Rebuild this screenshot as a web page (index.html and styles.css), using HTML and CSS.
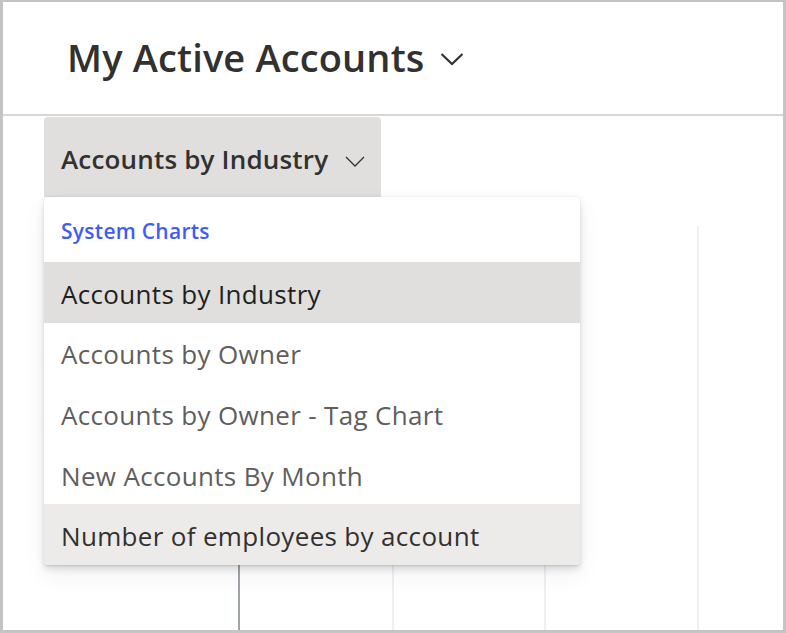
FILE: index.html
```html
<!DOCTYPE html>
<html lang="en">
<head>
<meta charset="utf-8">
<title>My Active Accounts</title>
<link rel="stylesheet" href="styles.css">
</head>
<body>
<div class="frame">
  <header class="header">
    <h1 class="title">My Active Accounts</h1>
    <svg class="title-chevron" width="24" height="14" viewBox="0 0 24 14"><polyline points="1.5,2 12,12 22.5,2" fill="none" stroke="#323130" stroke-width="2.2"/></svg>
  </header>
  <main class="content">
    <button class="chart-picker">
      <span class="picker-label">Accounts by Industry</span>
      <svg class="picker-chevron" width="20" height="11" viewBox="0 0 20 11"><polyline points="1,1 10,10 19,1" fill="none" stroke="#323130" stroke-width="1.3"/></svg>
    </button>
    <div class="chart">
      <div class="col col-axis"></div>
      <div class="col col-2"></div>
      <div class="col col-3"></div>
    </div>
    <div class="menu">
      <div class="menu-header">System Charts</div>
      <div class="menu-item selected">Accounts by Industry</div>
      <div class="menu-item">Accounts by Owner</div>
      <div class="menu-item">Accounts by Owner - Tag Chart</div>
      <div class="menu-item">New Accounts By Month</div>
      <div class="menu-item hover">Number of employees by account</div>
    </div>
  </main>
</div>
</body>
</html>
```

FILE: styles.css
```css
* { box-sizing: border-box; }
html, body { margin: 0; padding: 0; background: #fff; }
body { font-family: "Open Sans", "Noto Sans", "Liberation Sans", sans-serif; color: #323130; }

.frame {
  width: 786px;
  height: 633px;
  border-style: solid;
  border-color: #c4c4c4;
  border-width: 2px 3px 3px 3px;
  overflow: hidden;
  display: flex;
  flex-direction: column;
}

.header {
  height: 114px;
  flex: none;
  border-bottom: 2px solid #d6d6d6;
  display: flex;
  align-items: center;
  padding-left: 64px;
  padding-bottom: 2px;
}
.title {
  margin: 0;
  font-size: 38px;
  font-weight: 600;
  color: #323130;
  letter-spacing: 0.15px;
}
.title-chevron { margin-left: 16px; margin-top: 4px; }

.content {
  position: relative;
  flex: 1;
  padding-left: 41px;
  padding-top: 1px;
}

.chart-picker {
  display: flex;
  align-items: center;
  height: 80px;
  width: 337px;
  border: none;
  border-radius: 4px 4px 0 0;
  background: #e1dfdd;
  padding: 4px 0 0 17px;
  font-family: inherit;
  cursor: pointer;
}
.picker-label {
  font-size: 26px;
  font-weight: 600;
  color: #323130;
  letter-spacing: 0.18px;
}
.picker-chevron { margin-left: 17px; margin-top: 4px; }

.chart {
  display: flex;
  margin-top: 29px;
  margin-left: 194px;
  height: 420px;
}
.col {
  flex: none;
  border-right: 2px solid #eef0f4;
}
.col-axis { border-left: 2px solid #a0a4ab; width: 156px; }
.col-2 { width: 152px; }
.col-3 { width: 153px; }

.menu {
  position: absolute;
  left: 41px;
  top: 81px;
  width: 536px;
  background: #fff;
  border-radius: 4px;
  box-shadow: 0 3.2px 7.2px rgba(0,0,0,0.13), 0 0.6px 1.8px rgba(0,0,0,0.11), 0 10px 24px rgba(0,0,0,0.06);
  overflow: hidden;
}
.menu-header {
  height: 65px;
  padding: 20px 0 0 17px;
  font-size: 21px;
  font-weight: 600;
  color: #3f5ef0;
  letter-spacing: 0.27px;
}
.menu-item {
  height: 60.6px;
  display: flex;
  align-items: center;
  padding-left: 17px;
  padding-top: 3px;
  font-size: 26px;
  color: #605e5c;
  letter-spacing: 0.33px;
}
.menu-item.selected { background: #e1dfdd; color: #201f1e; }
.menu-item.hover { background: #edebe9; color: #323130; }
```
